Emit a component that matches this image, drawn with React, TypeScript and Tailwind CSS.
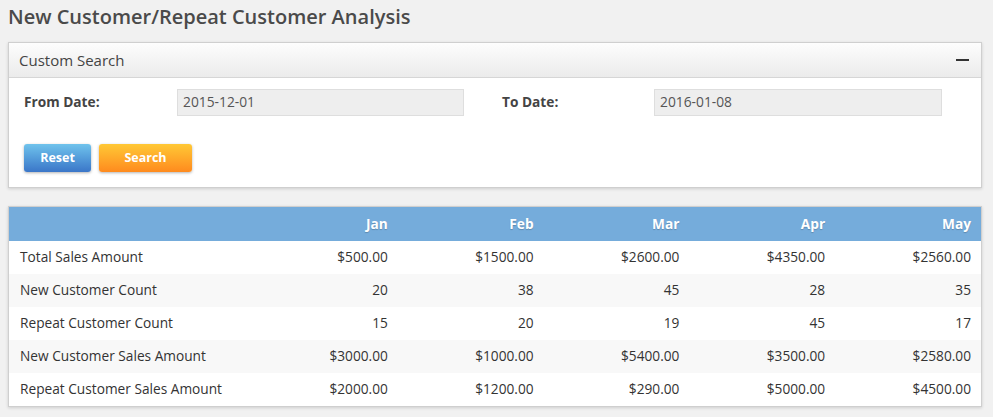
const months = ["Jan", "Feb", "Mar", "Apr", "May"];

const rows = [
  { label: "Total Sales Amount", values: ["$500.00", "$1500.00", "$2600.00", "$4350.00", "$2560.00"] },
  { label: "New Customer Count", values: ["20", "38", "45", "28", "35"] },
  { label: "Repeat Customer Count", values: ["15", "20", "19", "45", "17"] },
  { label: "New Customer Sales Amount", values: ["$3000.00", "$1000.00", "$5400.00", "$3500.00", "$2580.00"] },
  { label: "Repeat Customer Sales Amount", values: ["$2000.00", "$1200.00", "$290.00", "$5000.00", "$4500.00"] },
];

export default function App() {
  return (
    <div className="min-h-[417px] bg-[#f1f1f1] px-2 pt-[3px] pb-2 font-['Open_Sans',sans-serif] text-[#333]">
      <h1 className="text-[20px] leading-[28px] font-semibold text-[#4a4a4a]">
        New Customer/Repeat Customer Analysis
      </h1>

      {/* search panel */}
      <div className="mt-[11px] w-[974px] border border-[#cfcfcf] bg-white shadow-[0_1px_3px_rgba(0,0,0,0.15)]">
        <div className="flex h-[35px] items-center justify-between border-b border-[#d6d6d6] bg-gradient-to-b from-[#fdfdfd] to-[#ebebeb] pl-[10px] pr-[12px]">
          <span className="text-[15px] text-[#444]">Custom Search</span>
          <span className="block h-[2px] w-[13px] bg-[#333]" />
        </div>
        <div className="px-[15px] pt-[11px] pb-[15px]">
          <div className="flex items-center">
            <label className="w-[153px] text-[13.7px] font-bold text-[#444]">From Date:</label>
            <div className="flex h-[27px] w-[287px] items-center border border-[#dedede] bg-[#eeeeee] px-[5px] text-[13.8px] text-[#555]">
              2015-12-01
            </div>
            <label className="ml-[38px] w-[152px] text-[13.7px] font-bold text-[#444]">To Date:</label>
            <div className="flex h-[27px] w-[288px] items-center border border-[#dedede] bg-[#eeeeee] px-[5px] text-[13.8px] text-[#555]">
              2016-01-08
            </div>
          </div>
          <div className="mt-[28px] flex gap-[8px]">
            <button className="h-[28px] w-[67px] rounded-[3px] bg-gradient-to-b from-[#70c3ec] to-[#3b76c8] text-[12.5px] font-bold text-white shadow-[0_1px_3px_rgba(0,0,0,0.3)]">
              Reset
            </button>
            <button className="h-[28px] w-[93px] rounded-[3px] bg-gradient-to-b from-[#ffc835] to-[#fe8a1e] text-[12.5px] font-bold text-white shadow-[0_1px_3px_rgba(0,0,0,0.3)]">
              Search
            </button>
          </div>
        </div>
      </div>

      {/* table */}
      <div className="mt-[18px] w-[974px] border border-[#cfcfcf] bg-white shadow-[0_1px_3px_rgba(0,0,0,0.15)]">
        <div className="grid h-[34px] grid-cols-[243px_repeat(5,1fr)] items-center bg-[#75acdb] text-[13.7px] font-bold text-white [text-shadow:0_1px_1px_rgba(0,0,0,0.2)]">
          <span />
          {months.map((m) => (
            <span key={m} className="pr-[10px] text-right">{m}</span>
          ))}
        </div>
        {rows.map((r, i) => (
          <div
            key={r.label}
            className={`grid h-[33px] grid-cols-[243px_repeat(5,1fr)] items-center text-[13.7px] text-[#333] ${i % 2 === 1 ? "bg-[#f8f8f8]" : "bg-white"}`}
          >
            <span className="pl-[11px]">{r.label}</span>
            {r.values.map((v, j) => (
              <span key={j} className="pr-[10px] text-right">{v}</span>
            ))}
          </div>
        ))}
      </div>
    </div>
  );
}
